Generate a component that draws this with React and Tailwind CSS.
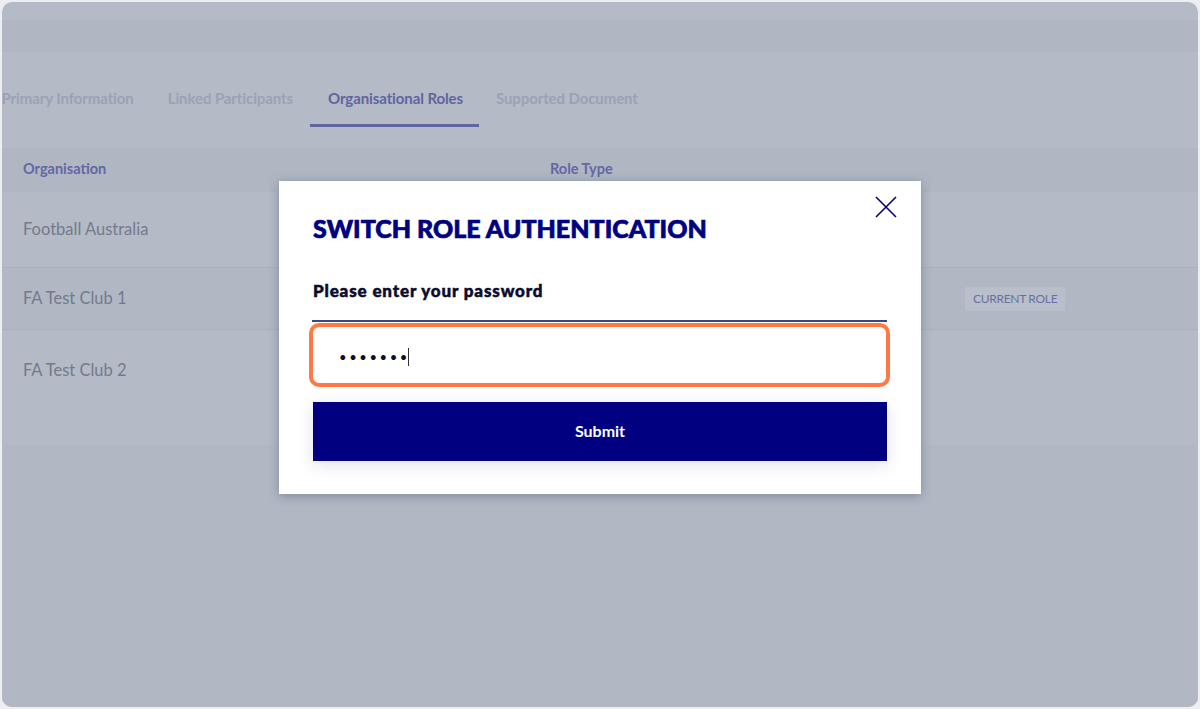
const tabs = [
  { label: 'Primary Information' },
  { label: 'Linked Participants' },
  { label: 'Organisational Roles', active: true },
  { label: 'Supported Document' },
];

const rows = [
  { name: 'Football Australia', h: 'h-[76px]', border: true },
  { name: 'FA Test Club 1', h: 'h-[62px]', current: true, shade: true, border: true },
  { name: 'FA Test Club 2', h: 'h-[115px]', pad: true },
];

const SwitchRoleModal = () => (
  <div className="absolute inset-0 flex justify-center pt-[179px]">
    <div className="relative w-[642px] h-[313px] bg-white shadow-[0_2px_10px_rgba(40,50,80,0.35)] px-[34px] pt-[32px]">
      <button className="absolute right-[24px] top-[15px] w-[22px] h-[22px]">
        <svg viewBox="0 0 22 22" className="w-[22px] h-[22px]" fill="none" stroke="#000080" strokeWidth="1.6">
          <path d="M1 1 L21 21 M21 1 L1 21" />
        </svg>
      </button>
      <h2 className="text-[25px] leading-[30px] font-black text-[#000080] tracking-[0px] [-webkit-text-stroke:0.7px_#000080]">
        SWITCH ROLE AUTHENTICATION
      </h2>
      <p className="mt-[38px] text-[17px] leading-[20px] font-black text-[#0b0b2b] tracking-[0.85px] [-webkit-text-stroke:0.5px_#0b0b2b]">
        Please enter your password
      </p>
      <div className="mt-[19px] relative h-[66px] border-t-2 border-[#3a4a78] ml-[-1px]">
        <div className="absolute left-[-3px] right-[-3px] top-[1px] h-[64px] rounded-[10px] border-[4px] border-[#ff7846] flex items-center pl-[26px]">
          <span className="text-[13px] tracking-[2.6px] text-[#0b0b2b] leading-none pt-[4px]">•••••••</span>
          <span className="w-px h-[18px] bg-[#333] mt-[4px] ml-[-2px]" />
        </div>
      </div>
      <button className="mt-[16px] w-full h-[59px] bg-[#000080] text-white text-[16px] font-bold pb-[2px] shadow-[0_4px_16px_rgba(0,0,128,0.12)]">
        Submit
      </button>
    </div>
  </div>
);

export default function App() {
  return (
    <div className="w-[1200px] h-[709px] bg-[#eceef2] p-[2px]" style={{ fontFamily: 'Lato, "Noto Sans", sans-serif' }}>
      <div className="relative w-full h-[705px] rounded-[10px] overflow-hidden bg-[#b4bac6]">
        <div className="h-[18px]" />
        <div className="h-[32px] bg-[#b0b7c3]" />
        <div className="flex items-end h-[75px] ml-[-17.5px]">
          {tabs.map((t) => (
            <div
              key={t.label}
              className={`pb-[16px] border-b-[3px] text-[15px] font-bold leading-[20px] tracking-[-0.1px] ${
                t.active ? 'border-[#5f65a3] text-[#5f65a3] pl-[18px] pr-[16px]' : 'px-[17px] border-transparent text-[#9ba2b4]'
              }`}
            >
              {t.label}
            </div>
          ))}
        </div>
        <div className="mt-[21px] h-[44px] bg-[#b0b7c3] flex items-center pb-[2px] px-[21px] text-[14.5px] font-bold text-[#6268a6]">
          <span className="w-[527px]">Organisation</span>
          <span>Role Type</span>
        </div>
        {rows.map((r) => (
          <div
            key={r.name}
            className={`${r.h} flex ${r.pad ? 'items-start pt-[28px]' : 'items-center'} px-[21px] ${
              r.border ? 'border-b border-[#aab1bd]' : ''
            } ${r.shade ? 'bg-[#b1b8c4]' : 'bg-[#b4bac6]'}`}
          >
            <span className="w-[942px] text-[16.5px] text-[#737a8c]">{r.name}</span>
            {r.current && (
              <span className="bg-[#b9bfca] px-[8px] h-[24px] flex items-center text-[12px] text-[#6a70a0] tracking-[-0.3px]">
                CURRENT ROLE
              </span>
            )}
          </div>
        ))}
        <div className="h-full bg-[#b1b8c4]" />
        <SwitchRoleModal />
      </div>
    </div>
  );
}
